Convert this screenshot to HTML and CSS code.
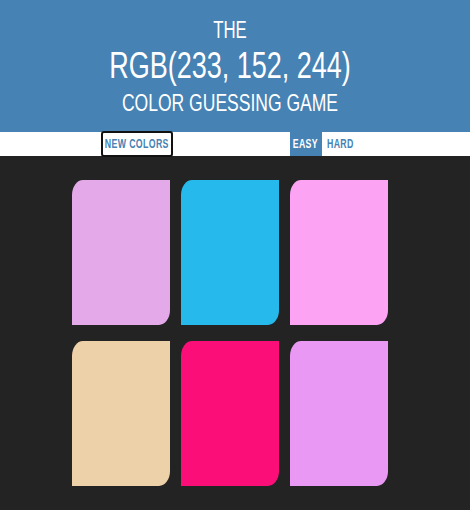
FILE: index.html
```html
<!DOCTYPE html>
<html lang="en">
<head>
<meta charset="utf-8">
<title>Color Game</title>
<link rel="stylesheet" href="styles.css">
</head>
<body>
  <h1 class="title">
    <span class="title-line title-small">The</span>
    <span class="title-line title-big">RGB(233, 152, 244)</span>
    <span class="title-line title-small title-last">Color Guessing Game</span>
  </h1>
  <nav class="stripe">
    <button class="btn btn-reset"><span class="btn-label">New Colors</span></button>
    <span class="message"></span>
    <button class="btn btn-easy is-selected"><span class="btn-label">Easy</span></button>
    <button class="btn btn-hard"><span class="btn-label">Hard</span></button>
  </nav>
  <main class="board">
    <div class="square sq-1"></div>
    <div class="square sq-2"></div>
    <div class="square sq-3"></div>
    <div class="square sq-4"></div>
    <div class="square sq-5"></div>
    <div class="square sq-6"></div>
  </main>
</body>
</html>
```
FILE: styles.css
```css
html, body {
  margin: 0;
  padding: 0;
  background: #232323;
}

body {
  font-family: "Liberation Sans", Arial, sans-serif;
  overflow: hidden;
}

.title {
  margin: 0;
  padding: 17px 10px 16px 0;
  background: #4682b4;
  color: #ffffff;
  font-weight: normal;
  text-align: center;
  text-transform: uppercase;
}

/* the type is drawn horizontally condensed */
.title-line {
  display: block;
  white-space: nowrap;
  transform: scaleX(0.73);
}

.title-small {
  font-size: 23px;
  line-height: 26px;
}

.title-last {
  font-size: 24px;
  line-height: 27px;
}

.title-big {
  font-size: 37px;
  line-height: 46px;
}

.stripe {
  display: flex;
  justify-content: center;
  height: 24px;
  padding-right: 10px;
  background: #ffffff;
}

.btn {
  display: flex;
  align-items: center;
  justify-content: center;
  box-sizing: border-box;
  margin: 0;
  padding: 0;
  border: none;
  height: 24px;
  background: #ffffff;
  color: #4682b4;
  font-family: "Liberation Sans", Arial, sans-serif;
  font-size: 12px;
  font-weight: 700;
  letter-spacing: 0.5px;
  text-transform: uppercase;
}

.btn-label {
  display: inline-block;
  white-space: nowrap;
  transform: scaleX(0.73);
}

.btn-reset {
  width: 72px;
  height: 26px;
  margin-top: -1px;
  border: 2px solid #111111;
  border-radius: 3px;
}

.message {
  width: 117px;
}

.btn-easy {
  width: 32px;
}

.btn-hard {
  width: 38px;
}

.is-selected {
  background: #4682b4;
  color: #ffffff;
}

.board {
  display: grid;
  grid-template-columns: repeat(3, 98px);
  grid-auto-rows: 145px;
  column-gap: 11px;
  row-gap: 16px;
  justify-content: center;
  padding: 24px 10px 0 0;
}

.square {
  border-radius: 11px 0 11px 0 / 15px 0 15px 0;
}

.sq-1 { background: rgb(227, 169, 233); }
.sq-2 { background: rgb(37, 185, 236); }
.sq-3 { background: rgb(252, 163, 244); }
.sq-4 { background: rgb(237, 209, 169); }
.sq-5 { background: rgb(251, 14, 120); }
.sq-6 { background: rgb(233, 152, 244); }
```
